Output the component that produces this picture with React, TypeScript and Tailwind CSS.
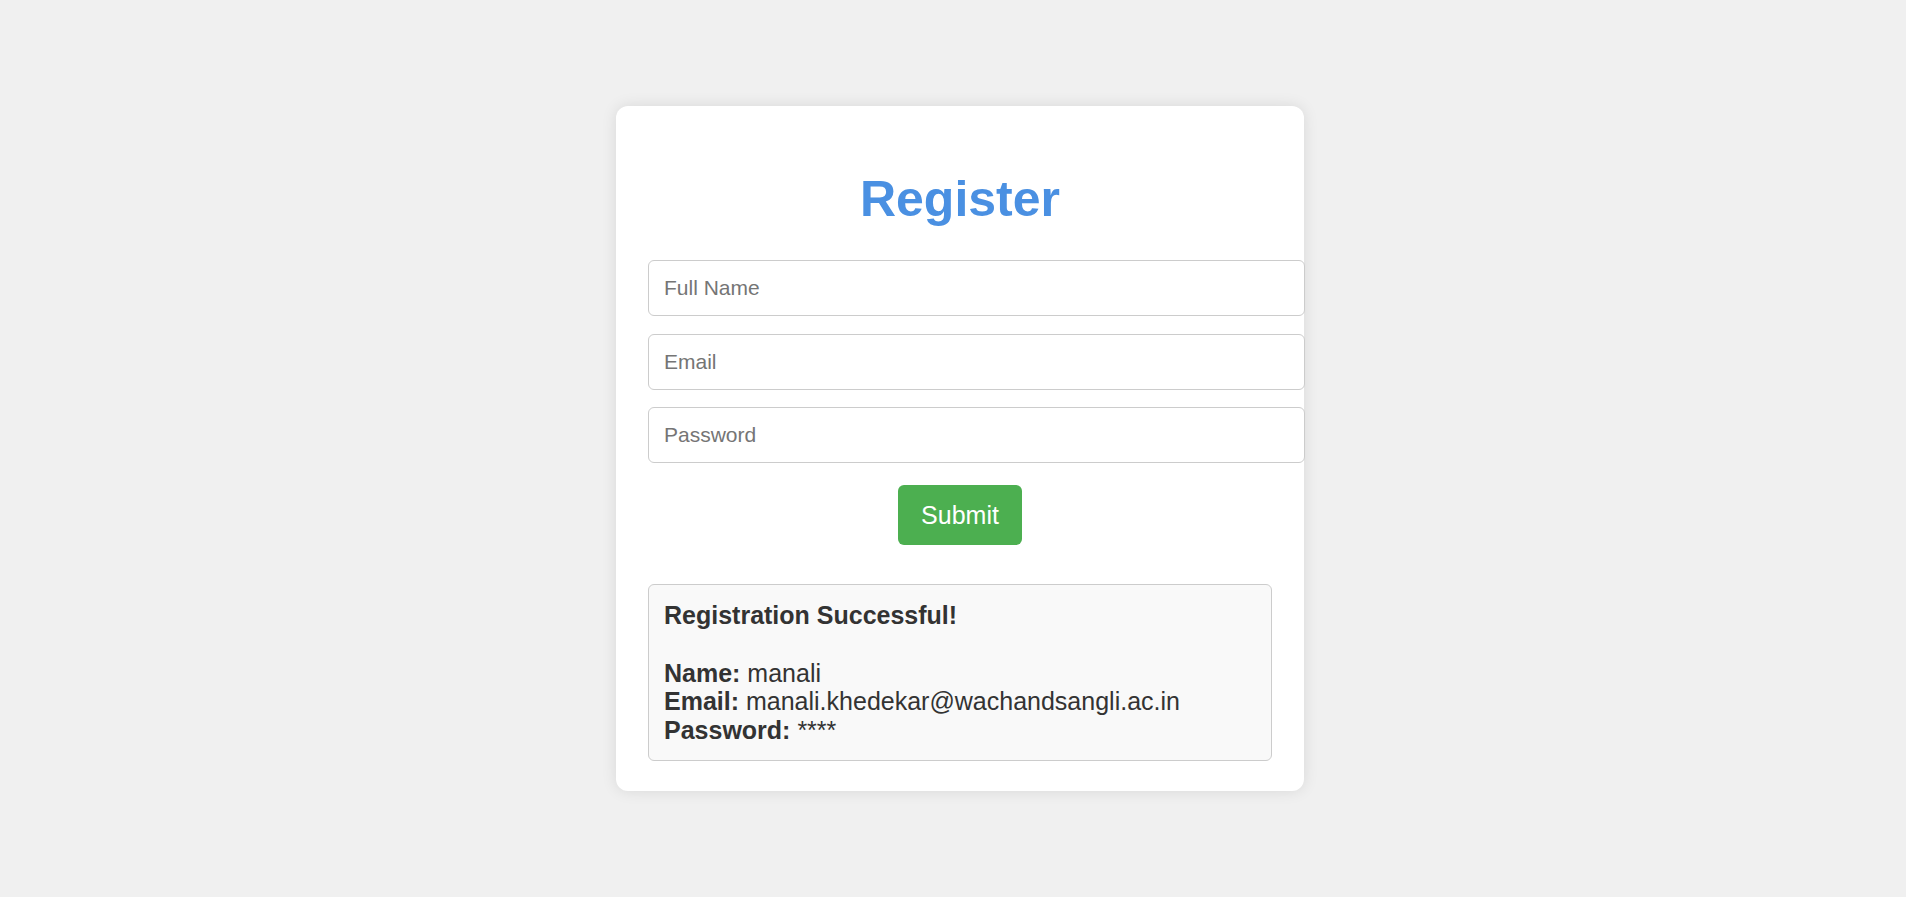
import React from 'react';

const fields = [
  { placeholder: 'Full Name', type: 'text' },
  { placeholder: 'Email', type: 'email' },
  { placeholder: 'Password', type: 'password' },
];

export default function App() {
  return (
    <div
      className="min-h-screen flex items-center justify-center pl-[14px] bg-[#f0f0f0] text-[#333]"
      style={{ fontFamily: '"Liberation Sans", Arial, sans-serif' }}
    >
      <div className="w-[688px] bg-white rounded-[12px] shadow-[0_0_15px_rgba(0,0,0,0.1)] px-[32px] pt-[32px] pb-[30px]">
        {/* Title */}
        <h1 className="mt-[33px] mb-[32px] text-center text-[50px] leading-[57.5px] font-bold text-[#4a90e2]">
          Register
        </h1>

        {/* Form */}
        <form onSubmit={(e) => e.preventDefault()}>
          {fields.map((f) => (
            <input
              key={f.placeholder}
              type={f.type}
              placeholder={f.placeholder}
              className="block w-[657px] max-w-none h-[56px] mb-[17.3px] px-[15px] border border-[#ccc] rounded-[6px] bg-white text-[21px] text-[#333] placeholder:text-[#757575] outline-none"
            />
          ))}
          <div className="flex justify-center pt-[5px]">
            <button
              type="submit"
              className="w-[124px] h-[60px] rounded-[6px] bg-[#4caf50] text-white text-[25px]"
            >
              Submit
            </button>
          </div>
        </form>

        {/* Result */}
        <div className="mt-[39px] border border-[#ccc] rounded-[6px] bg-[#f9f9f9] px-[15px] pt-[15.5px] pb-[16px]">
          <h3 className="text-[25px] leading-[28.7px] font-bold">Registration Successful!</h3>
          <div className="mt-[29.2px] text-[25px] leading-[28.5px]">
            <div>
              <span className="font-bold">Name:</span> manali
            </div>
            <div>
              <span className="font-bold">Email:</span> manali.khedekar@wachandsangli.ac.in
            </div>
            <div>
              <span className="font-bold">Password:</span> ****
            </div>
          </div>
        </div>
      </div>
    </div>
  );
}
